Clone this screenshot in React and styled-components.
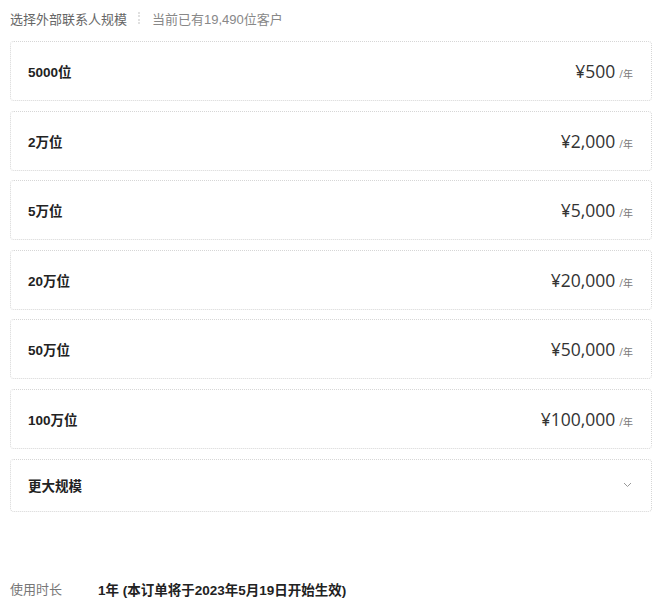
import styled, { createGlobalStyle } from "styled-components";

const GlobalStyle = createGlobalStyle`
  body {
    margin: 0;
    background: #ffffff;
    font-family: "Liberation Sans", "Noto Sans CJK SC", sans-serif;
    color: #333;
  }
`;

const Page = styled.div`
  width: 660px;
  padding: 8px 8px 0 10px;
  box-sizing: border-box;
`;

// HEADER
const Header = styled.div`
  display: flex;
  align-items: center;
  height: 20px;
  font-size: 13px;
  color: #666;
`;

const Divider = styled.span`
  display: inline-block;
  width: 0;
  height: 12px;
  border-left: 2px dotted #e0e0e0;
  margin: 0 12px 0 11px;
`;

const Hint = styled.span`
  color: #888;
`;

// OPTIONS
const OptionList = styled.div`
  display: flex;
  flex-direction: column;
  gap: 9.6px;
  margin-top: 13px;
`;

const Option = styled.div`
  display: flex;
  align-items: center;
  justify-content: space-between;
  height: ${(p) => (p.$short ? "53px" : "60px")};
  box-sizing: border-box;
  padding: 0 18px 0 17px;
  border: 1px dotted #d6d6d6;
  border-radius: 4px;
  background: #fff;
`;

const Label = styled.span`
  font-size: 13.5px;
  font-weight: bold;
  color: #222;
`;

const Price = styled.span`
  display: flex;
  align-items: baseline;
  font-family: "Open Sans", "Noto Sans CJK SC", sans-serif;
  font-size: 17.5px;
  color: #333;
`;

const Unit = styled.span`
  font-size: 10px;
  color: #777;
  margin-left: 4px;
`;

const Chevron = styled.svg`
  width: 9px;
  height: 6px;
  margin-right: 1px;
`;

// DURATION
const Duration = styled.div`
  display: flex;
  align-items: center;
  margin-top: 67px;
  font-size: 13px;
`;

const DurationLabel = styled.span`
  width: 88px;
  color: #777;
`;

const DurationValue = styled.span`
  font-size: 13.5px;
  font-weight: bold;
  color: #222;
`;

const plans = [
  { label: "5000位", price: "¥500" },
  { label: "2万位", price: "¥2,000" },
  { label: "5万位", price: "¥5,000" },
  { label: "20万位", price: "¥20,000" },
  { label: "50万位", price: "¥50,000" },
  { label: "100万位", price: "¥100,000" },
];

function App() {
  return (
    <Page>
      <GlobalStyle />
      <Header>
        选择外部联系人规模
        <Divider />
        <Hint>当前已有19,490位客户</Hint>
      </Header>
      <OptionList>
        {plans.map((plan) => (
          <Option key={plan.label}>
            <Label>{plan.label}</Label>
            <Price>
              {plan.price}
              <Unit>/年</Unit>
            </Price>
          </Option>
        ))}
        <Option $short>
          <Label>更大规模</Label>
          <Chevron viewBox="0 0 9 6">
            <path d="M1 1 L4.5 4.5 L8 1" fill="none" stroke="#999" strokeWidth="1" />
          </Chevron>
        </Option>
      </OptionList>
      <Duration>
        <DurationLabel>使用时长</DurationLabel>
        <DurationValue>1年 (本订单将于2023年5月19日开始生效)</DurationValue>
      </Duration>
    </Page>
  );
}

export default App;
